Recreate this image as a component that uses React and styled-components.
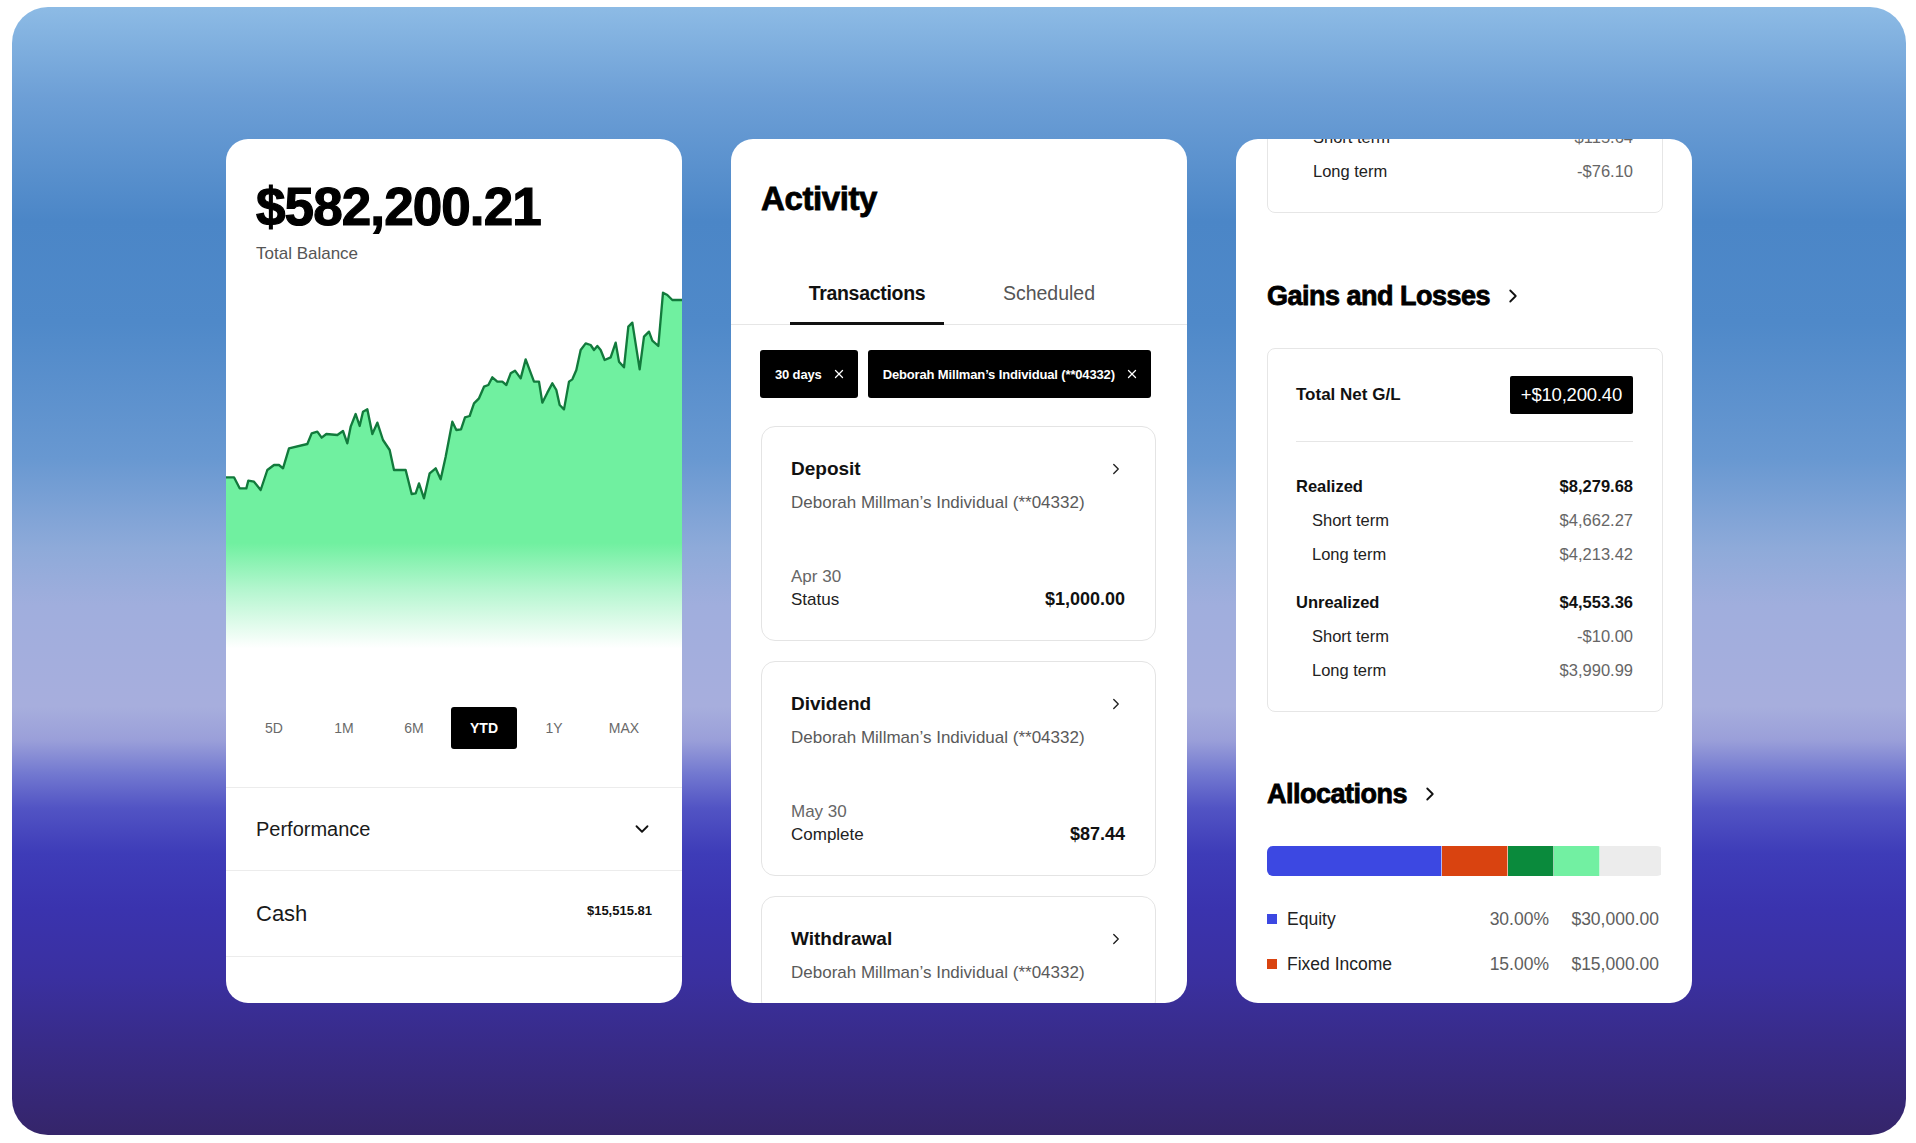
import React from 'react'
import styled, { createGlobalStyle } from 'styled-components'
import { ChevronRight, ChevronDown, X } from 'lucide-react'

const GlobalStyle = createGlobalStyle`
  html, body {
    margin: 0;
    padding: 0;
    background: #ffffff;
  }
  body {
    font-family: "Liberation Sans", Arial, sans-serif;
    color: #1a1a1a;
    -webkit-font-smoothing: antialiased;
  }
  * { box-sizing: border-box; }
`

const Frame = styled.div`
  margin: 7px 10px 8px 12px;
  height: 1128px;
  border-radius: 36px;
  overflow: hidden;
  background: linear-gradient(
    180deg,
    #8dbbe5 0%,
    #6d9fd6 8%,
    #4b86c7 19%,
    #4f89c9 28%,
    #6898d1 40%,
    #8eaad9 48%,
    #a0aedd 53%,
    #a7aedd 62%,
    #9a9fd9 65%,
    #7278d0 68%,
    #5254c4 71%,
    #3e3cb8 75%,
    #3a33ae 80%,
    #3a30a0 86%,
    #382b88 92%,
    #35256a 100%
  );
  display: flex;
  justify-content: center;
  align-items: flex-start;
  gap: 49px;
  padding-top: 132px;
`

const Card = styled.section`
  width: 456px;
  height: 864px;
  background: #ffffff;
  border-radius: 22px;
  overflow: hidden;
  display: flex;
  flex-direction: column;
`

const Heavy = styled.h2`
  margin: 0;
  font-family: "Liberation Sans", Arial, sans-serif;
  font-weight: 700;
  color: #000;
  -webkit-text-stroke: 0.8px #000;
`

/* ---------- balance card ---------- */

const BalanceHeader = styled.div`
  padding: 41px 30px 0;
`

const BigAmount = styled(Heavy)`
  font-size: 53px;
  line-height: 1;
  letter-spacing: -0.9px;
  -webkit-text-stroke: 1.2px #000;
`

const SubLabel = styled.div`
  margin-top: 11px;
  font-size: 17px;
  line-height: 20px;
  color: #555;
`

const ChartSvg = styled.svg`
  display: block;
  margin-top: 6px;
  width: 456px;
  height: 390px;
`

const RangeRow = styled.div`
  margin-top: 47px;
  padding-left: 13px;
  display: grid;
  grid-template-columns: repeat(6, 70px);
  height: 42px;
`

const RangeButton = styled.div`
  display: flex;
  align-items: center;
  justify-content: center;
  border-radius: 3px;
  font-size: 14px;
  font-weight: ${p => (p.$active ? 700 : 400)};
  background: ${p => (p.$active ? '#000' : 'transparent')};
  color: ${p => (p.$active ? '#fff' : '#6a6a6a')};
  margin: 0 ${p => (p.$active ? '2px' : '0')};
`

const ListRow = styled.div`
  margin-top: ${p => p.$mt || 0}px;
  height: ${p => p.$h}px;
  border-top: 1px solid #ececec;
  border-bottom: ${p => (p.$last ? '1px solid #ececec' : 'none')};
  padding: 0 29px 0 30px;
  display: flex;
  align-items: center;
  justify-content: space-between;
`

const RowLabel = styled.span`
  font-size: ${p => p.$size}px;
  color: #1a1a1a;
`

const RowValue = styled.span`
  font-size: 13px;
  font-weight: 700;
  color: #111;
  margin-right: 1px;
  margin-top: -7px;
`

/* ---------- activity card ---------- */

const ActivityTitle = styled(Heavy)`
  padding: 40px 30px 0;
  font-size: 33px;
  line-height: 40px;
  letter-spacing: -0.4px;
`

const TabList = styled.div`
  margin-top: 62px;
  padding-left: 59px;
  display: flex;
  gap: 28px;
  border-bottom: 1px solid #e6e6e6;
`

const Tab = styled.div`
  width: 154px;
  text-align: center;
  font-size: 19.5px;
  line-height: 24px;
  padding-bottom: 17px;
  margin-bottom: -1px;
  font-weight: ${p => (p.$active ? 700 : 400)};
  letter-spacing: ${p => (p.$active ? '-0.3px' : '0')};
  color: ${p => (p.$active ? '#111' : '#555')};
  border-bottom: 3px solid ${p => (p.$active ? '#111' : 'transparent')};
`

const ChipRow = styled.div`
  margin-top: 25px;
  padding: 0 29px;
  display: flex;
  gap: 10px;
`

const Chip = styled.div`
  height: 48px;
  padding: 0 12px 0 15px;
  display: flex;
  align-items: center;
  gap: 10px;
  background: #000;
  color: #fff;
  border-radius: 3px;
  font-size: 13px;
  font-weight: 700;
  letter-spacing: -0.15px;
`

const TxList = styled.div`
  margin-top: 28px;
  padding: 0 31px 0 30px;
  display: flex;
  flex-direction: column;
  gap: 20px;
`

const TxCard = styled.div`
  flex-shrink: 0;
  border: 1px solid #e4e4e4;
  border-radius: 14px;
  padding: 30px 30px 29px 29px;
`

const TxHead = styled.div`
  display: flex;
  align-items: center;
  justify-content: space-between;
  height: 24px;
`

const TxTitle = styled.div`
  font-size: 19px;
  font-weight: 700;
  color: #111;
`

const TxAccount = styled.div`
  margin-top: 10px;
  font-size: 17px;
  line-height: 24px;
  color: #5a5a5a;
`

const TxFoot = styled.div`
  margin-top: 50px;
  display: flex;
  align-items: flex-end;
  justify-content: space-between;
`

const TxMeta = styled.div`
  display: flex;
  flex-direction: column;
  font-size: 17px;
  line-height: 23px;
`

const TxDate = styled.span`
  color: #666;
`

const TxStatus = styled.span`
  color: #222;
`

const TxAmount = styled.span`
  font-size: 18px;
  line-height: 23px;
  font-weight: 700;
  color: #111;
`

/* ---------- gains card ---------- */

const Scroller = styled.div`
  margin-top: -20px;
  padding: 0 29px 0 31px;
  display: flex;
  flex-direction: column;
`

const Box = styled.div`
  margin-top: ${p => p.$mt || 0}px;
  border: 1px solid #e6e6e6;
  border-radius: 8px;
  padding: ${p => p.$pad};
`

const TermRow = styled.div`
  height: 34px;
  display: flex;
  align-items: center;
  justify-content: space-between;
  padding-left: ${p => (p.$sub ? '16px' : '0')};
  font-size: 16.5px;
  font-weight: ${p => (p.$sub ? 400 : 700)};
  color: ${p => (p.$sub ? '#222' : '#111')};
`

const TermValue = styled.span`
  color: ${p => (p.$sub ? '#666' : '#111')};
`

const Group = styled.div`
  margin-top: ${p => p.$mt}px;
`

const SectionHead = styled.div`
  margin-top: ${p => p.$mt}px;
  height: 34px;
  display: flex;
  align-items: center;
  gap: 12px;
`

const SectionTitle = styled(Heavy)`
  font-size: 27px;
  line-height: 34px;
  letter-spacing: -0.5px;
`

const TotalRow = styled.div`
  display: flex;
  align-items: center;
  justify-content: space-between;
  height: 38px;
`

const TotalLabel = styled.span`
  font-size: 17px;
  font-weight: 700;
  color: #111;
`

const Badge = styled.span`
  height: 38px;
  padding: 0 11px;
  display: flex;
  align-items: center;
  background: #000;
  color: #fff;
  border-radius: 2px;
  font-size: 18.5px;
  letter-spacing: -0.2px;
`

const Divider = styled.div`
  margin-top: 27px;
  height: 1px;
  background: #e6e6e6;
`

const AllocBar = styled.div`
  margin-top: 35px;
  height: 30px;
  display: flex;
  border-radius: 6px;
  overflow: hidden;
`

const Segment = styled.div`
  height: 100%;
  background: ${p => p.$color};
  border-right: ${p => (p.$sep ? '1px solid rgba(255,255,255,0.6)' : 'none')};
`

const Legend = styled.div`
  margin-top: 31px;
  display: flex;
  flex-direction: column;
  gap: 21px;
`

const LegendRow = styled.div`
  height: 24px;
  display: grid;
  grid-template-columns: 1fr auto 114px;
  align-items: center;
  font-size: 17.5px;
`

const LegendName = styled.span`
  display: flex;
  align-items: center;
  gap: 10px;
  color: #222;
`

const Swatch = styled.span`
  width: 10px;
  height: 10px;
  background: ${p => p.$color};
`

const LegendNum = styled.span`
  text-align: right;
  color: #5e5e5e;
  margin-right: ${p => p.$mr || 0}px;
`

/* ---------- data ---------- */

const chartPoints = [
  [21, 622], [45, 622], [62, 655], [82, 655], [88, 632], [105, 635], [125, 660],
  [145, 600], [165, 585], [180, 585], [192, 595], [210, 535], [265, 522], [278, 490],
  [295, 485], [308, 503], [322, 492], [355, 495], [372, 483], [385, 520], [395, 470],
  [410, 432], [422, 468], [432, 425], [445, 418], [460, 492], [475, 458], [492, 510],
  [512, 540], [525, 600], [540, 600], [560, 600], [578, 672], [590, 670], [600, 640],
  [615, 685], [632, 610], [650, 595], [665, 628], [680, 560], [700, 455], [712, 480],
  [726, 478], [738, 442], [752, 438], [765, 400], [780, 385], [795, 350], [808, 345],
  [820, 322], [835, 335], [850, 335], [862, 345], [875, 310], [888, 302], [905, 325],
  [920, 268], [945, 335], [960, 335], [970, 398], [985, 368], [1000, 340], [1012, 360],
  [1022, 405], [1035, 418], [1050, 335], [1060, 328], [1072, 300], [1085, 240],
  [1100, 220], [1115, 225], [1125, 240], [1135, 228], [1145, 240], [1157, 270],
  [1175, 262], [1190, 218], [1200, 275], [1215, 292], [1228, 170], [1240, 158],
  [1262, 298], [1275, 200], [1290, 185], [1300, 212], [1318, 228], [1332, 68],
  [1345, 75], [1360, 90], [1389, 90],
]

const linePath = chartPoints.map((p, i) => `${i ? 'L' : 'M'}${p[0]} ${p[1]}`).join(' ')
const areaPath = `${linePath} L1389 1170 L21 1170 Z`

const ranges = ['5D', '1M', '6M', 'YTD', '1Y', 'MAX']

// the last card runs past the bottom of the panel, so only its top is drawn
const transactions = [
  { type: 'Deposit', date: 'Apr 30', status: 'Status', amount: '$1,000.00' },
  { type: 'Dividend', date: 'May 30', status: 'Complete', amount: '$87.44' },
  { type: 'Withdrawal' },
]

const allocations = [
  { name: 'Equity', color: '#3c48e2', pct: '30.00%', amount: '$30,000.00', width: 175 },
  { name: 'Fixed Income', color: '#d94310', pct: '15.00%', amount: '$15,000.00', width: 66 },
  { name: 'Alternatives', color: '#0a8a3c', width: 46 },
  { name: 'Cash', color: '#72f0a2', width: 46 },
  { name: 'Other', color: '#ececec', width: 61 },
]

const BalanceCard = () => (
  <Card>
    <BalanceHeader>
      <BigAmount>$582,200.21</BigAmount>
      <SubLabel>Total Balance</SubLabel>
    </BalanceHeader>
    <ChartSvg viewBox="21 0 1368 1170" preserveAspectRatio="none">
      <defs>
        <linearGradient id="chartFill" x1="0" y1="0" x2="0" y2="1170" gradientUnits="userSpaceOnUse">
          <stop offset="0" stopColor="#70f0a0" />
          <stop offset="0.7" stopColor="#70f0a0" />
          <stop offset="0.82" stopColor="#b4f6cf" />
          <stop offset="0.97" stopColor="#ffffff" />
        </linearGradient>
      </defs>
      <path d={areaPath} fill="url(#chartFill)" />
      <path d={linePath} fill="none" stroke="#127a3c" strokeWidth="7" strokeLinejoin="round" strokeLinecap="round" />
    </ChartSvg>
    <RangeRow>
      {ranges.map(r => (
        <RangeButton key={r} $active={r === 'YTD'}>{r}</RangeButton>
      ))}
    </RangeRow>
    <ListRow $mt={38} $h={83}>
      <RowLabel $size={20}>Performance</RowLabel>
      <ChevronDown size={22} strokeWidth={2} color="#111" />
    </ListRow>
    <ListRow $h={87} $last>
      <RowLabel $size={22}>Cash</RowLabel>
      <RowValue>$15,515.81</RowValue>
    </ListRow>
  </Card>
)

const ActivityCard = () => (
  <Card>
    <ActivityTitle>Activity</ActivityTitle>
    <TabList>
      <Tab $active>Transactions</Tab>
      <Tab>Scheduled</Tab>
    </TabList>
    <ChipRow>
      <Chip>30 days <X size={14} strokeWidth={2.2} /></Chip>
      <Chip>Deborah Millman’s Individual (**04332) <X size={14} strokeWidth={2.2} /></Chip>
    </ChipRow>
    <TxList>
      {transactions.map(t => (
        <TxCard key={t.type}>
          <TxHead>
            <TxTitle>{t.type}</TxTitle>
            <ChevronRight size={18} strokeWidth={1.8} color="#222" />
          </TxHead>
          <TxAccount>Deborah Millman’s Individual (**04332)</TxAccount>
          {t.amount && (
            <TxFoot>
              <TxMeta>
                <TxDate>{t.date}</TxDate>
                <TxStatus>{t.status}</TxStatus>
              </TxMeta>
              <TxAmount>{t.amount}</TxAmount>
            </TxFoot>
          )}
        </TxCard>
      ))}
    </TxList>
  </Card>
)

const Term = ({ label, value, sub }) => (
  <TermRow $sub={sub}>
    <span>{label}</span>
    <TermValue $sub={sub}>{value}</TermValue>
  </TermRow>
)

const GainsCard = () => (
  <Card>
    <Scroller>
      <Box $pad="0 29px 24px 29px">
        <Term sub label="Short term" value="$115.64" />
        <Term sub label="Long term" value="-$76.10" />
      </Box>

      <SectionHead $mt={66}>
        <SectionTitle>Gains and Losses</SectionTitle>
        <ChevronRight size={22} strokeWidth={2} color="#111" />
      </SectionHead>

      <Box $mt={35} $pad="27px 29px 24px 28px">
        <TotalRow>
          <TotalLabel>Total Net G/L</TotalLabel>
          <Badge>+$10,200.40</Badge>
        </TotalRow>
        <Divider />
        <Group $mt={27}>
          <Term label="Realized" value="$8,279.68" />
          <Term sub label="Short term" value="$4,662.27" />
          <Term sub label="Long term" value="$4,213.42" />
        </Group>
        <Group $mt={14}>
          <Term label="Unrealized" value="$4,553.36" />
          <Term sub label="Short term" value="-$10.00" />
          <Term sub label="Long term" value="$3,990.99" />
        </Group>
      </Box>

      <SectionHead $mt={65}>
        <SectionTitle>Allocations</SectionTitle>
        <ChevronRight size={22} strokeWidth={2} color="#111" />
      </SectionHead>

      <AllocBar>
        {allocations.map((a, i) => (
          <Segment key={a.name} $color={a.color} $sep={i < allocations.length - 1} style={{ width: a.width }} />
        ))}
      </AllocBar>

      <Legend>
        {allocations.filter(a => a.amount).map(a => (
          <LegendRow key={a.name}>
            <LegendName><Swatch $color={a.color} />{a.name}</LegendName>
            <LegendNum>{a.pct}</LegendNum>
            <LegendNum $mr={4}>{a.amount}</LegendNum>
          </LegendRow>
        ))}
      </Legend>
    </Scroller>
  </Card>
)

export default function App() {
  return (
    <>
      <GlobalStyle />
      <Frame>
        <BalanceCard />
        <ActivityCard />
        <GainsCard />
      </Frame>
    </>
  )
}
